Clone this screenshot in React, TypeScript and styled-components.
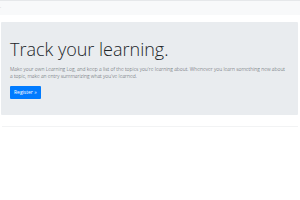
import styled, { createGlobalStyle } from 'styled-components'

const GlobalStyle = createGlobalStyle`
  html, body {
    margin: 0;
    padding: 0;
    background: #ffffff;
  }
  body {
    font-family: "Open Sans", "Noto Sans", "Liberation Sans", sans-serif;
    color: #212529;
  }
`

const Navbar = styled.nav`
  height: 14px;
  background: #f8f9fa;
  border-top: 1px solid #e6e8ea;
  display: flex;
  align-items: center;
`

const Brand = styled.span`
  font-size: 4px;
  line-height: 4px;
  color: #9aa0a6;
  margin-left: 0;
`

const Main = styled.main`
  padding: 7px 1px 0 1px;
`

const Jumbotron = styled.section`
  background: #e9ecef;
  border-radius: 1px;
  padding: 17px 9px 16px;
  margin: 0 1px 11px 0;
`

const Title = styled.h1`
  margin: 0 0 5px;
  font-size: 18px;
  font-weight: 300;
  line-height: 21.6px;
  color: #212529;
`

const Lead = styled.p`
  margin: 0 0 5px;
  padding-right: 2px;
  font-size: 5px;
  line-height: 7.5px;
  font-weight: 300;
  color: #495057;
`

const Actions = styled.div`
  display: flex;
`

const Button = styled.a`
  display: flex;
  align-items: center;
  height: 13px;
  padding: 0 4px;
  border-radius: 1px;
  background: #007bff;
  color: #ffffff;
  font-size: 5px;
  text-decoration: none;
`

const Rule = styled.hr`
  margin: 0 1px;
  border: 0;
  border-top: 1px solid #f2f3f4;
`

export default function App() {
  return (
    <>
      <GlobalStyle />
      <Navbar>
        <Brand>·</Brand>
      </Navbar>
      <Main>
        <Jumbotron>
          <Title>Track your learning.</Title>
          <Lead>
            Make your own Learning Log, and keep a list of the topics you're learning about. Whenever you learn something new about a topic, make an entry summarizing what you've learned.
          </Lead>
          <Actions>
            <Button href="#">Register »</Button>
          </Actions>
        </Jumbotron>
        <Rule />
      </Main>
    </>
  )
}
